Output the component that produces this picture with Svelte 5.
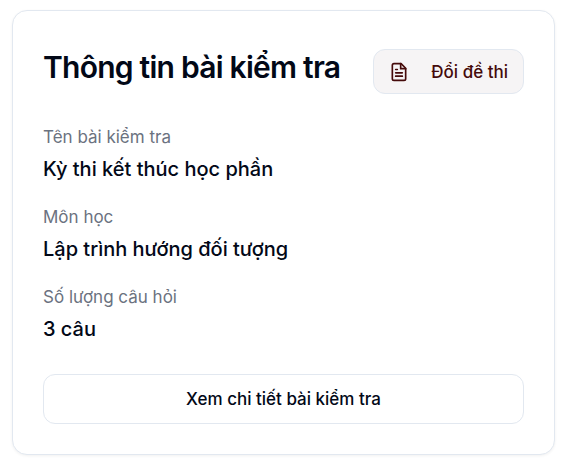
<script>
  const details = [
    { label: 'Tên bài kiểm tra', value: 'Kỳ thi kết thúc học phần' },
    { label: 'Môn học', value: 'Lập trình hướng đối tượng' },
    { label: 'Số lượng câu hỏi', value: '3 câu' }
  ];
</script>

<main class="page">
  <section class="card" aria-labelledby="title">
    <header>
      <h1 id="title">Thông tin bài kiểm tra</h1>
      <button class="swap" type="button">
        <svg viewBox="0 0 24 24" aria-hidden="true">
          <path d="M14.5 2H6a2 2 0 0 0-2 2v16a2 2 0 0 0 2 2h12a2 2 0 0 0 2-2V7.5L14.5 2z" />
          <path d="M14 2v6h6" />
          <path d="M10 9H8M16 13H8M16 17H8" />
        </svg>
        <span>Đổi đề thi</span>
      </button>
    </header>
    <dl>
      {#each details as item}
        <div>
          <dt>{item.label}</dt>
          <dd>{item.value}</dd>
        </div>
      {/each}
    </dl>
    <button class="more" type="button">Xem chi tiết bài kiểm tra</button>
  </section>
</main>

<style>
  :global(body) {
    background: #fff;
  }
  .page {
    padding: 10px 12px;
    font-family: Inter, sans-serif;
    color: #020817;
  }
  .card {
    padding: 38px 30px 30px;
    border: 1px solid #e2e8f0;
    border-radius: 15px;
    background: #fff;
    box-shadow: 0 1px 3px rgb(0 0 0 / 0.06);
  }
  header {
    display: flex;
    align-items: flex-start;
    justify-content: space-between;
  }
  h1 {
    margin: 0;
    font-size: 30px;
    line-height: 36px;
    font-weight: 600;
    letter-spacing: -0.025em;
  }
  button {
    border: 1px solid #e2e8f0;
    font-family: inherit;
    font-size: 17px;
    font-weight: 500;
    cursor: pointer;
  }
  .swap {
    display: flex;
    align-items: center;
    gap: 22px;
    height: 45px;
    padding: 0 15px;
    border-radius: 12px;
    background: #f6f4f5;
    color: #450a0a;
  }
  .swap svg {
    width: 20px;
    height: 20px;
    fill: none;
    stroke: currentColor;
    stroke-width: 2;
    stroke-linecap: round;
    stroke-linejoin: round;
  }
  dl {
    display: grid;
    gap: 20px;
    margin: 30px 0;
  }
  dt {
    color: #6b7280;
    font-size: 17px;
    line-height: 27px;
  }
  dd {
    margin: 3px 0 0;
    font-size: 20px;
    line-height: 30px;
    font-weight: 500;
  }
  .more {
    width: 100%;
    height: 50px;
    border-radius: 12px;
    background: #fff;
    color: #020817;
  }
</style>
